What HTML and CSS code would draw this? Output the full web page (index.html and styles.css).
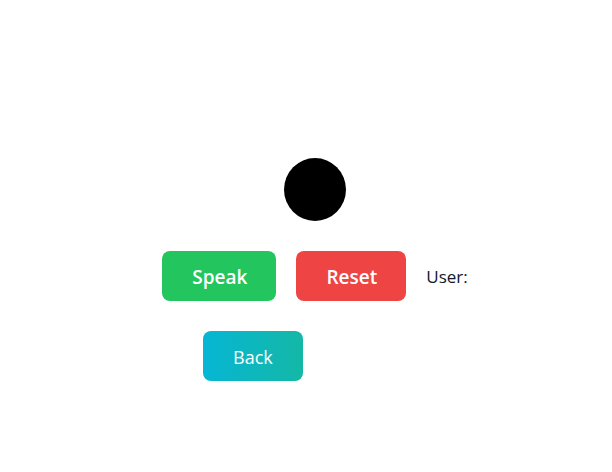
FILE: index.html
```html
<!DOCTYPE html>
<html lang="en">
<head>
<meta charset="utf-8">
<title>Voice assistant</title>
<link rel="stylesheet" href="styles.css">
</head>
<body>
<main class="page">
  <div class="orb"></div>
  <div class="controls">
    <button class="button speak" type="button">Speak</button>
    <button class="button reset" type="button">Reset</button>
    <p class="user">User:</p>
  </div>
  <div class="footer">
    <button class="button back" type="button">Back</button>
  </div>
</main>
</body>
</html>
```
FILE: styles.css
```css
* {
  box-sizing: border-box;
}

body {
  margin: 0;
  background: #fff;
  color: #111827;
  font-family: "Open Sans", "Noto Sans", sans-serif;
}

.page {
  display: flex;
  flex-direction: column;
  align-items: center;
  gap: 30px;
  padding: 158px 0 0 18px;
}

.orb {
  width: 62px;
  height: 63px;
  border-radius: 50%;
  background: #000;
}

.controls {
  display: flex;
  align-items: center;
  gap: 20px;
}

.button {
  height: 50px;
  padding: 2px 30px 0;
  border: 0;
  border-radius: 8px;
  color: #fff;
  font-family: inherit;
  font-size: 18px;
  line-height: 28px;
}

.speak,
.reset {
  padding: 2px 29px 0 30px;
  font-size: 19px;
  font-weight: 600;
}

.speak {
  background: #22c55e;
}

.reset {
  background: #ef4444;
}

.back {
  background: linear-gradient(to right, #06b6d4, #14b8a6);
}

.user {
  margin: 0;
  padding-top: 2px;
  font-size: 17px;
  line-height: 28px;
}

.footer {
  width: 304px;
  padding-left: 40px;
}
```
